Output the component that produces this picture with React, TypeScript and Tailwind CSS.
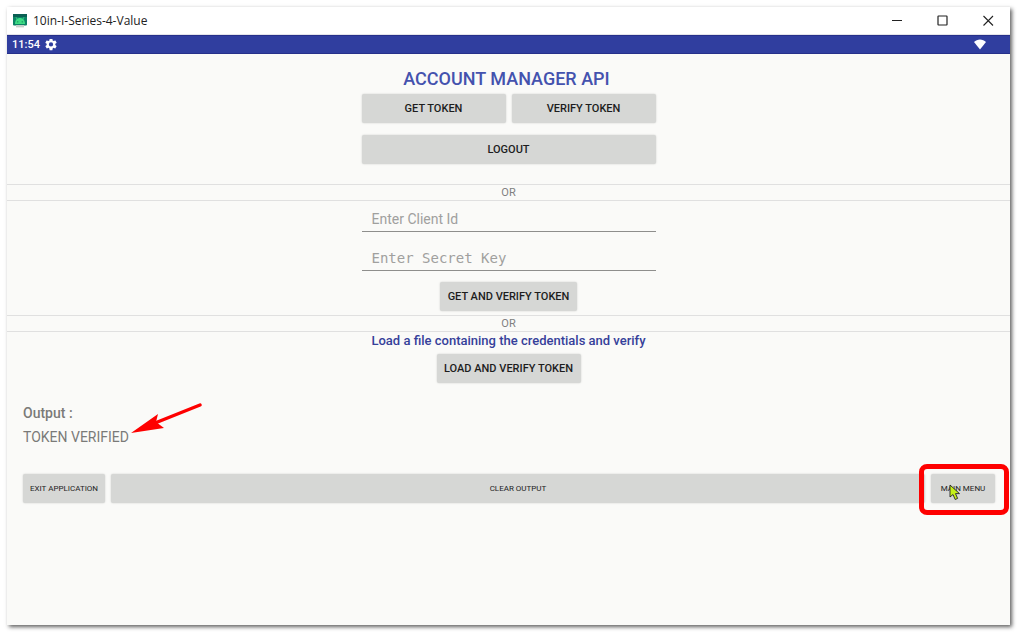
import type { ButtonHTMLAttributes } from "react";
import { clsx } from "clsx";

function ApiButton({ className, ...props }: ButtonHTMLAttributes<HTMLButtonElement>) {
  return (
    <button
      type="button"
      className={clsx(
        "h-[29px] rounded-xs bg-[#d6d7d5] whitespace-nowrap text-[#1d1d1d] shadow-[0_0_2px_#00000030]",
        className
      )}
      {...props}
    />
  );
}

function OrDivider() {
  return (
    <div className="flex h-[17px] items-center justify-center border-y border-[#e0e0e0] pt-[2px] text-[11px] text-[#808080]">
      OR
    </div>
  );
}

function TitleBar() {
  return (
    <header className="flex h-7 items-center border-b border-[#e4e4ea] bg-white pl-[6px]">
      <svg width="14" height="14" viewBox="0 0 14 14" aria-hidden="true">
        <rect x="0" y="0" width="14" height="11.5" rx="1" fill="#0c8265" />
        <rect x="0" y="0" width="14" height="3" fill="#0a5f53" />
        <path d="M2 10 C2 6 4 4 7 4 C10 4 12 6 12 10 Z" fill="#3ddc84" />
        <path d="M4 5 L3 3.2 M10 5 L11 3.2" stroke="#3ddc84" strokeWidth="0.8" />
        <circle cx="4.8" cy="7.8" r="0.6" fill="#0c6f57" />
        <circle cx="9.2" cy="7.8" r="0.6" fill="#0c6f57" />
        <path d="M3 11 H11 V13.4 H3 Z" fill="#c9cfcc" />
      </svg>
      <h1 className="ml-[6px] flex-1 font-['Open_Sans',sans-serif] text-[12px] text-[#222]">
        10in-I-Series-4-Value
      </h1>
      <button type="button" aria-label="Minimize" className="flex h-full w-[46px] items-center justify-center">
        <svg width="12" height="12" viewBox="0 0 12 12" stroke="#222" fill="none">
          <path d="M1 5.5 H11" />
        </svg>
      </button>
      <button type="button" aria-label="Maximize" className="flex h-full w-[46px] items-center justify-center">
        <svg width="12" height="12" viewBox="0 0 12 12" stroke="#222" fill="none" strokeWidth="1.2">
          <rect x="1" y="1" width="9" height="9" rx="0.5" />
        </svg>
      </button>
      <button type="button" aria-label="Close" className="flex h-full w-[44px] items-center justify-center">
        <svg width="12" height="12" viewBox="0 0 12 12" stroke="#222" fill="none" strokeWidth="1.1">
          <path d="M1.5 1 L11 10.5 M11 1 L1.5 10.5" />
        </svg>
      </button>
    </header>
  );
}

function StatusBar() {
  return (
    <div className="flex h-[19px] items-center border-y border-[#26308a] bg-[#303e9f] pr-[24px] pl-[5px] text-white">
      <span className="pt-px text-[11px] font-medium">11:54</span>
      <svg className="ml-[5px]" width="12" height="12" viewBox="2 3 20 20" fill="currentColor" aria-hidden="true">
        <path d="M19.14 12.94c.04-.3.06-.61.06-.94 0-.32-.02-.64-.07-.94l2.03-1.58a.49.49 0 0 0 .12-.61l-1.92-3.32a.49.49 0 0 0-.59-.22l-2.39.96c-.5-.38-1.03-.7-1.62-.94l-.36-2.54a.48.48 0 0 0-.48-.41h-3.84c-.24 0-.43.17-.47.41l-.36 2.54c-.59.24-1.13.57-1.62.94l-2.39-.96a.49.49 0 0 0-.59.22L2.74 8.87c-.12.21-.08.47.12.61l2.03 1.58c-.05.3-.09.63-.09.94s.02.64.07.94l-2.03 1.58a.49.49 0 0 0-.12.61l1.92 3.32c.12.22.37.29.59.22l2.39-.96c.5.38 1.03.7 1.62.94l.36 2.54c.05.24.24.41.48.41h3.84c.24 0 .44-.17.47-.41l.36-2.54c.59-.24 1.13-.56 1.62-.94l2.39.96c.22.08.47 0 .59-.22l1.92-3.32c.12-.22.07-.47-.12-.61l-2.01-1.58zM12 15.6a3.6 3.6 0 1 1 0-7.2 3.6 3.6 0 0 1 0 7.2z" />
      </svg>
      <svg className="ml-auto" width="12" height="12" viewBox="0 0 12 12" fill="currentColor" aria-hidden="true">
        <path d="M6 10.5 L0 3 C3.2 -0.4 8.8 -0.4 12 3 Z" />
      </svg>
    </div>
  );
}

export default function App() {
  return (
    <div className="flex min-h-screen flex-col bg-white p-[7px] font-[Roboto,sans-serif]">
      <div className="flex flex-1 flex-col bg-[#fafaf8] shadow-[2px_2px_4px_#000000a0]">
        <TitleBar />
        <StatusBar />

        <main className="flex flex-col pt-[13px]">
          <section className="mx-auto flex w-[294px] flex-col">
            <h2 className="mr-1 text-center text-[18px] leading-6 font-medium whitespace-nowrap text-[#4452ae]">
              ACCOUNT MANAGER API
            </h2>
            <div className="mt-[3px] grid grid-cols-2 gap-[6px]">
              <ApiButton className="pt-[2px] text-[11px] font-medium">GET TOKEN</ApiButton>
              <ApiButton className="pt-[2px] text-[11px] font-medium">VERIFY TOKEN</ApiButton>
            </div>
            <ApiButton className="mt-3 mb-5 pt-[2px] text-[11px] font-medium">LOGOUT</ApiButton>
          </section>

          <OrDivider />

          <form className="mx-auto mb-1 flex w-[294px] flex-col">
            <input
              type="text"
              aria-label="Client Id"
              placeholder="Enter Client Id"
              className="h-[31px] border-b border-[#8e8e8c] px-[10px] pt-[6px] text-[14px] outline-none placeholder:text-[#a0a09e]"
            />
            <input
              type="password"
              aria-label="Secret Key"
              placeholder="Enter Secret Key"
              className="mt-2 h-[31px] border-b border-[#8e8e8c] px-[10px] pt-[6px] font-['DejaVu_Sans_Mono',monospace] text-[14px] outline-none placeholder:text-[#a0a09e]"
            />
            <ApiButton className="mx-auto mt-[11px] w-[137px] pt-[2px] text-[11px] font-medium">
              GET AND VERIFY TOKEN
            </ApiButton>
          </form>

          <OrDivider />

          <section className="flex flex-col items-center">
            <p className="text-[13px] leading-[18px] font-medium text-[#35409a]">
              Load a file containing the credentials and verify
            </p>
            <ApiButton className="mt-1 w-[144px] pt-[2px] text-[11px] font-medium">LOAD AND VERIFY TOKEN</ApiButton>
          </section>

          <section className="mt-5 px-4 text-[14px] leading-5 text-[#7a7a78]">
            <h3 className="font-medium">Output :</h3>
            <p className="relative mt-1 w-fit">
              TOKEN VERIFIED
              <svg
                className="absolute -top-6 left-full"
                width="76"
                height="34"
                viewBox="0 0 76 34"
                aria-hidden="true"
              >
                <path d="M71 2 L26 20" stroke="#fe0000" strokeWidth="3.4" strokeLinecap="round" />
                <path d="M2 30 L29 11 L27 19 L35 25 Z" fill="#fe0000" />
              </svg>
            </p>
          </section>

          <footer className="mt-[27px] flex gap-[6px] pr-[15px] pl-4">
            <ApiButton className="w-[82px] text-[8px]">EXIT APPLICATION</ApiButton>
            <ApiButton className="flex-1 text-[8px]">CLEAR OUTPUT</ApiButton>
            <div className="relative flex">
              <ApiButton className="w-[64px] text-[8px]">MAIN MENU</ApiButton>
              {/* highlight frame and pointer over the button */}
              <span className="pointer-events-none absolute -top-[10px] -right-[14px] -bottom-[12px] -left-[12px] rounded-lg border-[5px] border-[#fe0000]" />
              <svg
                className="pointer-events-none absolute top-[10px] left-[18px]"
                width="13"
                height="18"
                viewBox="0 0 13 18"
                aria-hidden="true"
              >
                <path
                  d="M1 1 V13 L4 10.5 L6.2 15.5 L8.6 14.4 L6.5 9.6 H10.5 Z"
                  fill="#c6f01a"
                  stroke="#222"
                  strokeWidth="0.9"
                  strokeLinejoin="round"
                />
              </svg>
            </div>
          </footer>
        </main>
      </div>
    </div>
  );
}
